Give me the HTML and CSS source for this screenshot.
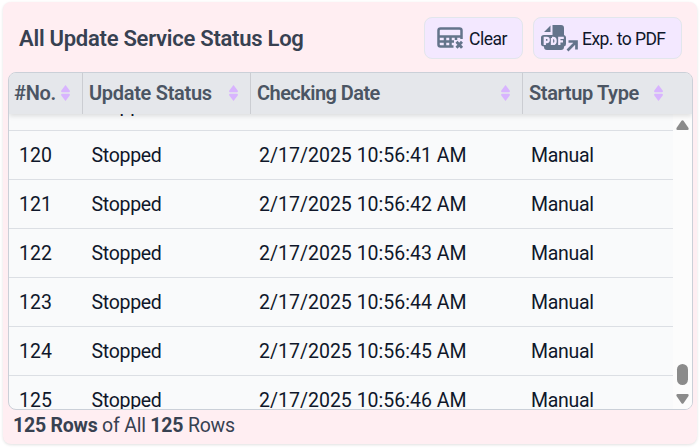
FILE: index.html
```html
<!DOCTYPE html>
<html lang="en">
<head>
<meta charset="utf-8">
<title>All Update Service Status Log</title>
<link rel="stylesheet" href="styles.css">
</head>
<body>
<svg class="defs" width="0" height="0" aria-hidden="true">
  <symbol id="sort" viewBox="0 0 9 16"><path d="M4.500 0 8.700 5.500Q9.300 7.200 8 7.200H1Q-.3 7.200 .3 5.500ZM4.500 16 8.700 10.500Q9.300 8.800 8 8.800H1Q-.3 8.800 .3 10.500Z"/></symbol>
</svg>
<main class="card">
  <header class="toolbar">
    <h1 class="title">All Update Service Status Log</h1>
    <button class="btn btn-clear">
      <svg width="26" height="22" viewBox="0 0 26 22">
        <path fill="none" stroke="currentColor" stroke-width="2.500" d="M16.500 19.500H3.500Q1.500 19.500 1.500 17.500V3.500Q1.500 1.500 3.500 1.500H22.500Q24.500 1.500 24.500 3.500V12M1.500 9.500H24.500M1.500 14.500H17M8 9.500V19.500M13.500 9.500V19.500M19 9.500V13"/>
        <path fill="none" stroke="currentColor" stroke-width="2.800" d="M19.500 14.800 25 20.800M25 14.800 19.500 20.800"/>
      </svg>
      <span class="label-clear">Clear</span>
    </button>
    <button class="btn btn-pdf">
      <svg width="37" height="27" viewBox="0 0 37 27">
        <path fill="currentColor" d="M11.500 0H20Q23 0 23 3V10Q25 10.500 25 12.500V19Q25 21 23 21.500V22Q23 25 20 25H6Q3 25 3 22V21.500Q0 21 0 19V12.500Q0 10 3 10H11.500ZM9.500 .5V7H3Z"/>
        <path fill="none" stroke="#f3e8ff" stroke-width="2.300" d="M3.800 20V12.900H5.800Q7.700 12.900 7.700 14.900T5.800 17H3.800M11 12.900V18.900H12Q14.600 18.900 14.600 15.900T12 12.900H11M18.300 20V12.900H22.800M18.300 16.400H22"/>
        <path fill="none" stroke="currentColor" stroke-width="2.700" d="M26.500 25.500 35 17M27.500 16.500H35.500V24.500"/>
      </svg>
      <span class="label-pdf">Exp. to PDF</span>
    </button>
  </header>
  <section class="table">
    <div class="row head">
      <div><span>#No.</span><svg class="sort"><use href="#sort"/></svg></div>
      <div><span>Update Status</span><svg class="sort"><use href="#sort"/></svg></div>
      <div><span class="label-date">Checking Date</span><svg class="sort"><use href="#sort"/></svg></div>
      <div><span>Startup Type</span><svg class="sort"><use href="#sort"/></svg></div>
    </div>
    <div class="viewport">
      <div class="rows">
        <div class="row partial"><div>119</div><div>Stopped</div><div>2/17/2025 10:56:40 AM</div><div>Manual</div></div>
        <div class="row"><div>120</div><div>Stopped</div><div>2/17/2025 10:56:41 AM</div><div>Manual</div></div>
        <div class="row"><div>121</div><div>Stopped</div><div>2/17/2025 10:56:42 AM</div><div>Manual</div></div>
        <div class="row"><div>122</div><div>Stopped</div><div>2/17/2025 10:56:43 AM</div><div>Manual</div></div>
        <div class="row"><div>123</div><div>Stopped</div><div>2/17/2025 10:56:44 AM</div><div>Manual</div></div>
        <div class="row"><div>124</div><div>Stopped</div><div>2/17/2025 10:56:45 AM</div><div>Manual</div></div>
        <div class="row"><div>125</div><div>Stopped</div><div>2/17/2025 10:56:46 AM</div><div>Manual</div></div>
      </div>
      <div class="scrollbar">
        <svg width="13" height="10" viewBox="0 0 13 10"><path d="M5.500 .8Q6.500-.3 7.500 .8L12.500 8Q13 10 11.500 10H1.500Q0 10 .5 8Z"/></svg>
        <i class="thumb"></i>
        <svg width="13" height="10" viewBox="0 0 13 10"><path d="M5.500 9.200Q6.500 10.300 7.500 9.200L12.500 2Q13 0 11.500 0H1.500Q0 0 .5 2Z"/></svg>
      </div>
    </div>
  </section>
  <footer class="summary"><b>125 Rows</b> of All <b>125</b> Rows</footer>
</main>
</body>
</html>
```
FILE: styles.css
```css
* { box-sizing: border-box; }
body {
  margin: 0;
  padding: 2px 3px;
  height: 448px;
  overflow: hidden;
  background: #fff;
  color: #0f172a;
  font-family: Roboto, "Noto Sans", sans-serif;
  font-size: 19.5px;
}
.defs { position: absolute; }
.card {
  height: 442px;
  padding: 0 4px 0 5px;
  border-radius: 8px;
  background: #ffeef2;
  box-shadow: 0 1px 3px rgba(0, 0, 0, .12);
}
.toolbar {
  display: flex;
  align-items: center;
  height: 70px;
  padding: 2px 11px 0 11px;
}
.title {
  flex: 1;
  margin: 0;
  color: #374151;
  font-size: 22px;
  font-weight: 600;
  letter-spacing: -.26px;
  white-space: nowrap;
}
.btn {
  display: flex;
  align-items: center;
  height: 42px;
  padding: 0;
  border: 1px solid #e2e6ec;
  border-radius: 8px;
  background: #f3e8ff;
  color: #0f172a;
  font: 17.5px Roboto, sans-serif;
  white-space: nowrap;
}
.btn svg { flex: none; color: #64748b; }
.btn span { padding-top: 2px; }
.label-clear { letter-spacing: -.5px; }
.label-pdf { letter-spacing: -.55px; }
.btn-clear { width: 99px; margin-right: 10px; padding-left: 12px; gap: 6px; }
.btn-pdf { width: 149px; padding-left: 7px; gap: 4px; }
.table {
  height: 338px;
  border: 1px solid #cbd0d8;
  border-radius: 8px;
  overflow: hidden;
  background: #f9fafb;
}
.row {
  display: grid;
  grid-template-columns: 74px 168px 272px 1fr;
  height: 49px;
  border-bottom: 1px solid #dcdfe4;
}
.row > div {
  display: flex;
  align-items: center;
  padding: 0 0 0 8px;
  white-space: nowrap;
}
.row > div:first-child { padding-left: 10px; }
.row > div:nth-child(even) { letter-spacing: -.3px; }
.row > div:nth-child(2) { padding-left: 8.5px; }
.partial > div { padding-bottom: 1px; }
.head {
  position: relative;
  z-index: 1;
  height: 41px;
  border: 0;
  background: #e5e7eb;
  box-shadow: 0 2px 5px rgba(0, 0, 0, .12);
  color: #4b5563;
  font-size: 20px;
  font-weight: 600;
}
.row.head > div {
  justify-content: space-between;
  padding: 0 12px 1px 6px;
  border-right: 1px solid #cbcdd2;
  letter-spacing: -.3px;
}
.row.head > div:first-child { padding-left: 5px; }
.row.head > div:last-child { padding-right: 29px; border: 0; letter-spacing: -.38px; }
.label-date { letter-spacing: -.55px; }
.sort { flex: none; width: 9px; height: 16px; fill: #d8b4fe; }
.viewport { display: flex; height: 295px; overflow: hidden; }
.rows { flex: 1; margin-top: -32px; }
.scrollbar {
  display: flex;
  flex-direction: column;
  align-items: center;
  width: 19px;
  padding: 6px 0 5px;
  background: #fcfcfc;
  fill: #8b8b8b;
}
.thumb { width: 11px; height: 21px; margin: auto 0 9px; border-radius: 6px; background: #8b8b8b; }
.summary { padding: 4px 0 0 5px; color: #374151; font-size: 19.5px; line-height: 24px; letter-spacing: -.22px; }
```
